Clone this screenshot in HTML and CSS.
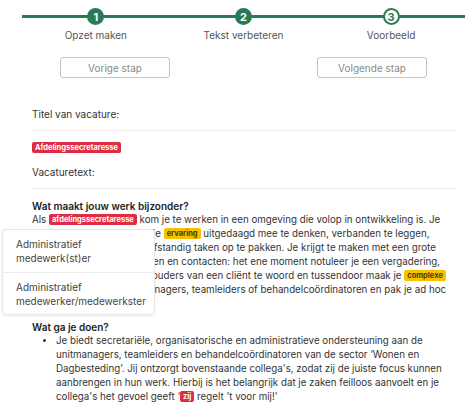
FILE: index.html
```html
<!DOCTYPE html>
<html lang="nl">
<head>
<meta charset="utf-8">
<link rel="stylesheet" href="styles.css">
</head>
<body>
<div class="page">
  <div class="stepper">
    <div class="track">
      <div class="step"><span class="dot done">1</span></div>
      <div class="step"><span class="dot done">2</span></div>
      <div class="step"><span class="dot open">3</span></div>
    </div>
    <div class="labels">
      <div class="label">Opzet maken</div>
      <div class="label">Tekst verbeteren</div>
      <div class="label">Voorbeeld</div>
    </div>
  </div>

  <div class="buttons">
    <button class="btn">Vorige stap</button>
    <button class="btn">Volgende stap</button>
  </div>

  <div class="content">
    <div class="field-label">Titel van vacature:</div>
    <div class="title-row"><span class="tag red big">Afdelingssecretaresse</span></div>
    <div class="field-label">Vacaturetext:</div>

    <div class="text">
      <div class="heading">Wat maakt jouw werk bijzonder?</div>
      <p class="para">Als <span class="tag red">afdelingssecretaresse</span> kom je te werken in een omgeving die volop in ontwikkeling is. Je<br>wordt met jouw kennis en je <span class="tag yellow">ervaring</span> uitgedaagd mee te denken, verbanden te leggen,<br>overzicht te houden en zelfstandig taken op te pakken. Je krijgt te maken met een grote<br>variatie aan werkzaamheden en contacten: het ene moment notuleer je een vergadering,<br>het andere moment sta je ouders van een cliënt te woord en tussendoor maak je <span class="tag yellow">complexe</span><br>planningen voor de unitmanagers, teamleiders of behandelcoördinatoren en pak je ad hoc</p>

      <div class="heading second">Wat ga je doen?</div>
      <ul class="list">
        <li>Je biedt secretariële, organisatorische en administratieve ondersteuning aan de<br>unitmanagers, teamleiders en behandelcoördinatoren van de sector ‘Wonen en<br>Dagbesteding’. Jij ontzorgt bovenstaande collega's, zodat zij de juiste focus kunnen<br>aanbrengen in hun werk. Hierbij is het belangrijk dat je zaken feilloos aanvoelt en je<br>collega's het gevoel geeft ‘<span class="tag red">zij</span> regelt 't voor mij!'</li>
      </ul>
    </div>
  </div>

  <div class="menu">
    <div class="menu-item">Administratief<br>medewerk(st)er</div>
    <div class="menu-item">Administratief<br>medewerker/medewerkster</div>
  </div>
</div>
</body>
</html>
```

FILE: styles.css
```css
* { box-sizing: border-box; }
html, body { margin: 0; padding: 0; background: #fff; }
body {
  font-family: Inter, "Open Sans", sans-serif;
  font-size: 9.75px;
  color: #333;
  width: 476px;
  height: 407px;
  overflow: hidden;
}
.page { position: relative; }

.stepper { padding: 8px 11px 0 22px; }
.track {
  display: flex;
  width: 443px;
  height: 17px;
  background: linear-gradient(#2b7a57, #2b7a57) left 7px / 100% 3px no-repeat;
}
.step { flex: 1; display: flex; justify-content: center; }
.dot {
  width: 17px; height: 17px; border-radius: 50%;
  display: flex; align-items: center; justify-content: center;
  font-weight: 700; font-size: 11px;
}
.dot.done { background: #2b7a57; color: #fff; }
.dot.open { background: #fff; color: #2b7a57; border: 2px solid #2b7a57; }
.labels { display: flex; width: 443px; margin-top: 3px; }
.label { flex: 1; text-align: center; color: #555; font-size: 10px; line-height: 14px; }

.buttons { display: flex; gap: 147px; padding: 15px 0 0 60px; }
.btn {
  width: 110px; height: 21px;
  border: 1px solid #c4c4c4; border-radius: 3px; background: #fff;
  font-family: inherit; font-size: 10px; color: #8a8a8a; padding: 0;
}

.content { padding: 29px 20px 0 32px; }
.field-label {
  font-size: 10px; line-height: 14px; color: #333;
  padding-bottom: 9px;
  border-bottom: 1px solid #ececec;
}
.title-row { padding: 11px 0 12px; line-height: 11px; }

.tag {
  display: inline-block;
  font-size: 7.5px; font-weight: 700; line-height: 11px;
  padding: 0 3px; border-radius: 2px; vertical-align: 1px;
}
.tag.red { background: #dd2c44; color: #fff; }
.tag.yellow { background: #f6c200; color: #4a3b00; }

.text { padding-top: 10px; }
.heading { font-weight: 600; font-size: 10px; line-height: 14px; color: #222; }
.heading.second { margin-top: 23px; }
.para { margin: 0; line-height: 14px; white-space: nowrap; }
.list { margin: 0; padding-left: 24px; line-height: 14px; white-space: nowrap; }

.menu {
  position: absolute; left: 2px; top: 229px; width: 153px;
  background: #fff; border: 1px solid #e6e6e6; border-radius: 4px;
  box-shadow: 0 1px 3px rgba(0,0,0,0.08);
}
.menu-item {
  padding: 7px 13px; line-height: 14px; height: 42px;
  font-size: 10px; color: #444;
}
.menu-item + .menu-item { border-top: 1px solid #ececec; }
```
